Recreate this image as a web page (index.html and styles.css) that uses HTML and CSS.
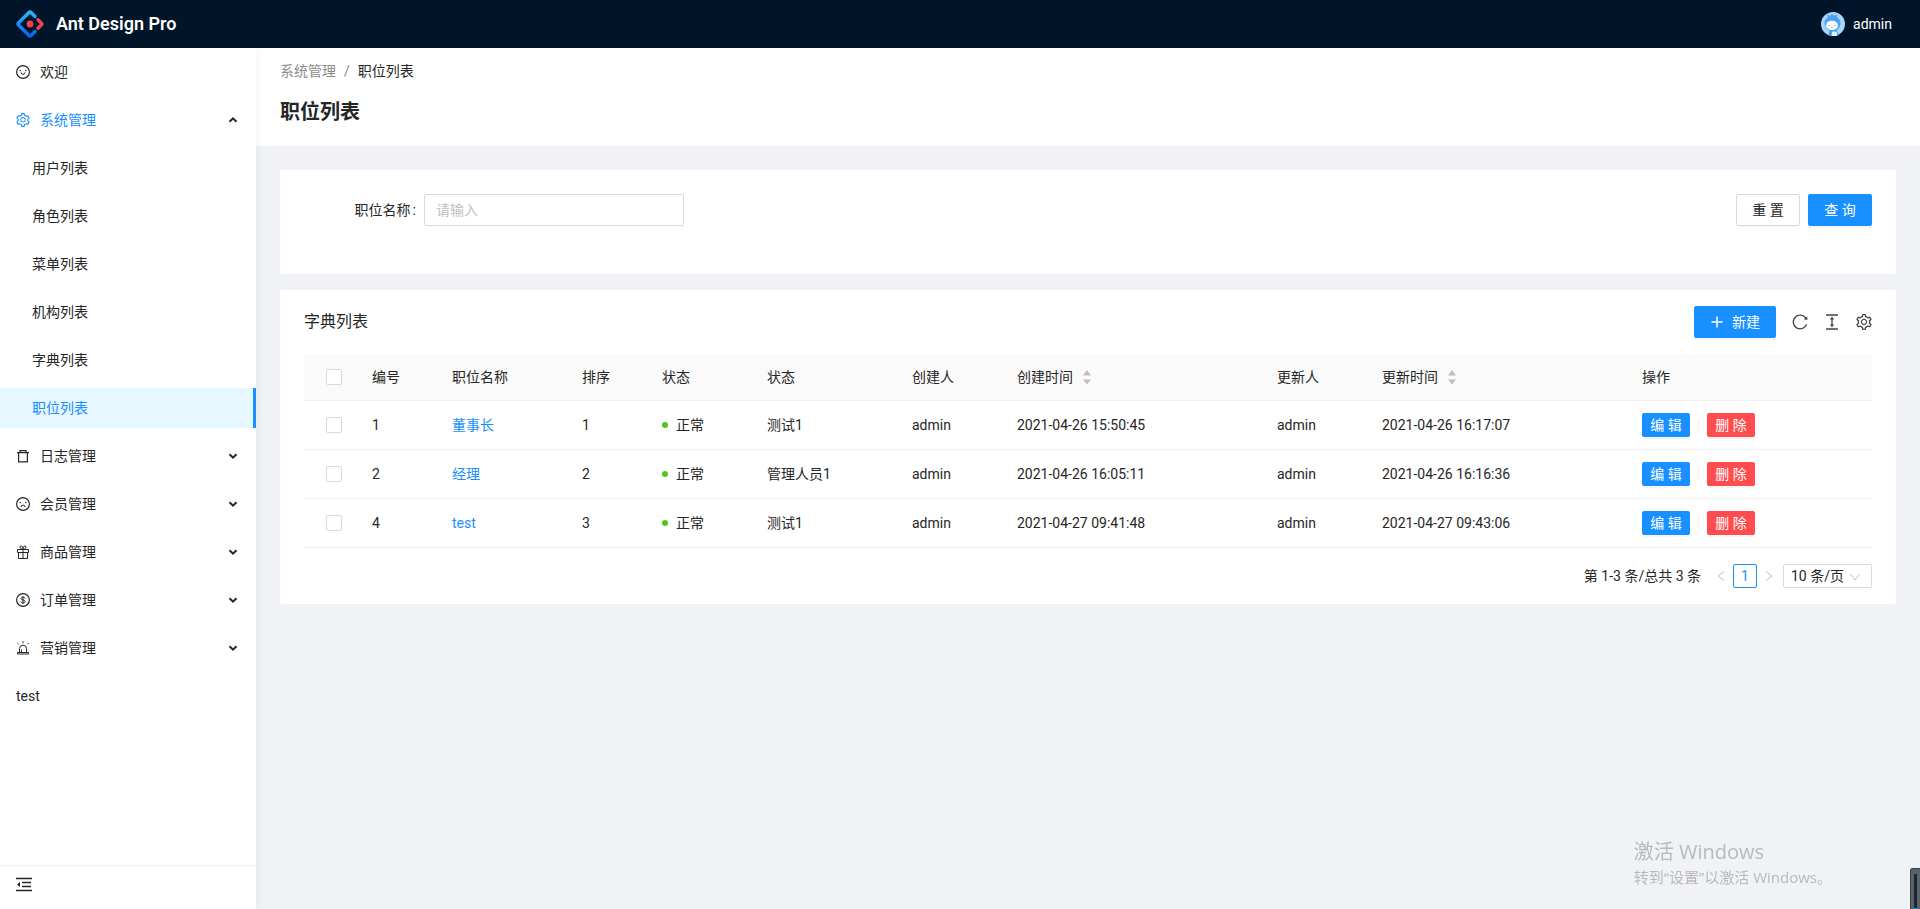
FILE: index.html
```html
<!DOCTYPE html>
<html lang="zh-CN">
<head>
<meta charset="utf-8">
<title>职位列表 - Ant Design Pro</title>
<link rel="stylesheet" href="styles.css">
</head>
<body>
<svg class="sprite" aria-hidden="true">
  <symbol id="i-face" viewBox="0 0 896 896"><circle cx="448" cy="448" r="410" fill="none" stroke="currentColor" stroke-width="76"/><circle cx="272" cy="357" r="48"/><circle cx="624" cy="357" r="48"/></symbol>
  <symbol id="i-setting" viewBox="64 64 896 896"><path d="M924.8 625.7l-65.5-56c3.1-19 4.7-38.4 4.7-57.8s-1.6-38.8-4.7-57.8l65.5-56a32.03 32.03 0 009.3-35.2l-.9-2.6a443.74 443.74 0 00-79.7-137.9l-1.8-2.1a32.12 32.12 0 00-35.1-9.5l-81.3 28.9c-30-24.6-63.5-44-99.7-57.6l-15.7-85a32.05 32.05 0 00-25.8-25.7l-2.7-.5c-52.1-9.4-106.9-9.4-159 0l-2.7.5a32.05 32.05 0 00-25.8 25.7l-15.8 85.4a351.86 351.86 0 00-99 57.4l-81.9-29.1a32 32 0 00-35.1 9.5l-1.8 2.1a446.02 446.02 0 00-79.7 137.9l-.9 2.6c-4.5 12.5-.8 26.5 9.3 35.2l66.3 56.6c-3.1 18.8-4.6 38-4.6 57.1 0 19.2 1.5 38.4 4.6 57.1L99 625.5a32.03 32.03 0 00-9.3 35.2l.9 2.6c18.1 50.4 44.9 96.9 79.7 137.9l1.8 2.1a32.12 32.12 0 0035.1 9.5l81.9-29.1c29.8 24.5 63.1 43.9 99 57.4l15.8 85.4a32.05 32.05 0 0025.8 25.7l2.7.5a449.4 449.4 0 00159 0l2.7-.5a32.05 32.05 0 0025.8-25.7l15.7-85a350 350 0 0099.7-57.6l81.3 28.9a32 32 0 0035.1-9.5l1.8-2.1c34.8-41.1 61.6-87.5 79.7-137.9l.9-2.6c4.5-12.3.8-26.3-9.3-35zM788.3 465.9c2.5 15.1 3.8 30.6 3.8 46.1s-1.3 31-3.8 46.1l-6.6 40.1 74.7 63.9a370.03 370.03 0 01-42.6 73.6L721 702.8l-31.4 25.8c-23.9 19.6-50.5 35-79.3 45.8l-38.1 14.3-17.9 97a377.5 377.5 0 01-85 0l-17.9-97.2-37.8-14.5c-28.5-10.8-55-26.2-78.7-45.7l-31.4-25.9-93.4 33.2c-17-22.9-31.2-47.6-42.6-73.6l75.5-64.5-6.5-40c-2.4-14.9-3.7-30.3-3.7-45.5 0-15.3 1.2-30.6 3.7-45.5l6.5-40-75.5-64.5c11.3-26.1 25.6-50.7 42.6-73.6l93.4 33.2 31.4-25.9c23.7-19.5 50.2-34.9 78.7-45.7l37.9-14.3 17.9-97.2c28.1-3.2 56.8-3.2 85 0l17.9 97 38.1 14.3c28.7 10.8 55.4 26.2 79.3 45.8l31.4 25.8 92.8-32.9c17 22.9 31.2 47.6 42.6 73.6L781.8 426l6.5 39.9zM512 326c-97.2 0-176 78.8-176 176s78.8 176 176 176 176-78.8 176-176-78.8-176-176-176zm79.2 255.2A111.6 111.6 0 01512 614c-29.9 0-58-11.7-79.2-32.8A111.6 111.6 0 01400 502c0-29.9 11.7-58 32.8-79.2C454 401.6 482.1 390 512 390c29.9 0 58 11.6 79.2 32.8A111.6 111.6 0 01624 502c0 29.9-11.7 58-32.8 79.2z"/></symbol>
  <symbol id="i-reload" viewBox="64 64 896 896"><path d="M909.1 209.3l-56.4 44.1C775.8 155.1 656.2 92 521.9 92 290 92 102.3 279.5 102 511.5 101.7 743.7 289.8 932 521.9 932c181.3 0 335.8-115 394.6-276.1 1.5-4.2-.7-8.9-4.9-10.3l-56.7-19.5a8 8 0 00-10.1 4.8c-1.8 5-3.8 10-5.9 14.9-17.3 41-42.1 77.8-73.7 109.4A344.77 344.77 0 01655.9 829c-42.3 17.9-87.4 27-133.8 27-46.5 0-91.5-9.1-133.8-27A341.5 341.5 0 01279 755.2a342.16 342.16 0 01-73.7-109.4c-17.9-42.4-27-87.4-27-133.9s9.1-91.5 27-133.9c17.3-41 42.1-77.8 73.7-109.4 31.6-31.6 68.4-56.4 109.3-73.8 42.3-17.9 87.4-27 133.8-27 46.5 0 91.5 9.1 133.8 27a341.5 341.5 0 01109.3 73.8c9.9 9.9 19.2 20.4 27.8 31.4l-60.2 47a8 8 0 003 14.1l175.6 43c5 1.2 9.9-2.6 9.9-7.7l.8-180.9c-.1-6.6-7.8-10.3-13-6.2z"/></symbol>
  <symbol id="i-chevron" viewBox="0 0 10 10"><path d="M1.5 3.2 5 6.6l3.500-3.400" fill="none" stroke="currentColor" stroke-width="2"/></symbol>
  <symbol id="i-sort" viewBox="0 0 10 16"><path d="M1 6.500 5 1l4 5.500zM1 10.500h8L5 15.500z"/></symbol>
  <symbol id="i-angle" viewBox="0 0 12 12"><path d="M1.500 3 6 9l4.500-6" fill="none" stroke="currentColor"/></symbol>
</svg>

<header class="topbar">
  <a class="brand" href="#">
    <svg class="logo" viewBox="0 0 28 28" fill="none" stroke-linecap="round" stroke-linejoin="round" stroke-width="3.400">
      <defs><linearGradient id="g-blue" x1="0" y1="0" x2="0" y2="1"><stop offset="0" stop-color="#29b9fb"/><stop offset="1" stop-color="#0a62f5"/></linearGradient></defs>
      <path stroke="url(#g-blue)" d="M19 6.500 15 2.500Q14 1.500 13 2.500L2.500 13Q1.500 14 2.500 15L13 25.500Q14 26.500 15 25.500L19 21.500"/>
      <path stroke="#f0424e" d="M22 9.700 25.500 13.200Q26.300 14 25.500 14.800L22 18.300"/>
      <circle cx="14" cy="14" r="3.400" fill="#f0424e"/>
    </svg>
    <span class="brand-name">Ant Design Pro</span>
  </a>
  <div class="account">
    <svg class="avatar" viewBox="0 0 24 24">
      <circle cx="12" cy="12" r="12" fill="#a5d5fb"/>
      <path d="M7 5 6 2.500l3 1.200 2-1.700 2 1.600 3-1 0 3z" fill="#5b9fe0"/>
      <path d="M9 18h6.500l2 5a12 12 0 0 1-10 0z" fill="#2e9df5"/>
      <path d="M11 19.500h4.500l1 4a12 12 0 0 1-6 .4z" fill="#e0f1ff"/>
      <ellipse cx="11.500" cy="11.500" rx="8" ry="7.800" fill="#4aa3ef"/>
      <ellipse cx="11" cy="13.400" rx="6" ry="4.700" fill="#fff"/>
      <path d="M7.500 13.500h1.500M13 13.500h1.500M10 15.300h2" stroke="#8ba9d8"/>
    </svg>
    <span>admin</span>
  </div>
</header>

<div class="layout">
  <aside class="sidebar">
    <nav class="menu">
      <a class="item" href="#"><svg class="icon"><use href="#i-face"/><svg viewBox="0 0 896 896"><path class="line" d="M320 470a128 128 0 0 0 256 0" stroke-width="64"/></svg></svg>欢迎</a>
      <a class="item open" href="#"><svg class="icon"><use href="#i-setting"/></svg>系统管理<svg class="arrow up"><use href="#i-chevron"/></svg></a>
      <a class="item sub" href="#">用户列表</a>
      <a class="item sub" href="#">角色列表</a>
      <a class="item sub" href="#">菜单列表</a>
      <a class="item sub" href="#">机构列表</a>
      <a class="item sub" href="#">字典列表</a>
      <a class="item sub selected" href="#" aria-current="page">职位列表</a>
      <a class="item" href="#"><svg class="icon line" viewBox="0 0 14 14" stroke-width="1.200"><path d="M1 3.600h12M4 3.300V1.600h6v1.700M2.600 3.800v9.100h8.800V3.800"/></svg>日志管理<svg class="arrow"><use href="#i-chevron"/></svg></a>
      <a class="item" href="#"><svg class="icon"><use href="#i-face"/><svg viewBox="0 0 896 896"><path class="line" d="M320 650a128 128 0 0 1 256 0" stroke-width="64"/></svg></svg>会员管理<svg class="arrow"><use href="#i-chevron"/></svg></a>
      <a class="item" href="#"><svg class="icon line" viewBox="0 0 14 14"><path d="M1.500 4.500h11v3h-11zM2.500 7.500v6h9v-6M7 4.500v9"/><path d="M7 4.300C3.500 4.300 3.200 1 5 1s2 2 2 3.300C7 3 7.200 1 9 1s1.500 3.300-2 3.300z"/></svg>商品管理<svg class="arrow"><use href="#i-chevron"/></svg></a>
      <a class="item" href="#"><svg class="icon line" viewBox="0 0 14 14"><circle cx="7" cy="7" r="6.400" stroke-width="1.200"/><path d="M9 5.500C8.800 4.500 8 4.200 7 4.200c-1.200 0-2 .5-2 1.400C5 7.400 9.100 6.500 9.100 8.400c0 1-.9 1.500-2.100 1.500S5 9.400 4.900 8.400M7 3.200v7.600"/></svg>订单管理<svg class="arrow"><use href="#i-chevron"/></svg></a>
      <a class="item" href="#"><svg class="icon line" viewBox="0 0 14 14"><path d="M3.500 11.500V7.700a3.500 3.500 0 0 1 7 0v3.800M1.500 11.500h11v1.500h-11zM5.500 11V8.500M7 .3v2M1.300 2l1.200 1.200M12.700 2l-1.200 1.200"/></svg>营销管理<svg class="arrow"><use href="#i-chevron"/></svg></a>
      <a class="item" href="#">test</a>
    </nav>
    <div class="sidebar-foot">
      <button class="icon-btn" type="button" aria-label="收起菜单"><svg class="icon-lg line" viewBox="0 0 16 16" stroke-width="1.300"><path d="M0 1.500h16M0 13.500h16M6 5.500h9M6 9.500h9"/><path class="solid" d="M4 5v5L1 7.500z"/></svg></button>
    </div>
  </aside>

  <main class="main">
    <div class="page-head">
      <nav class="crumbs"><a href="#">系统管理</a><span class="slash">/</span><span class="current">职位列表</span></nav>
      <h1>职位列表</h1>
    </div>

    <div class="content">
      <form class="card search">
        <div class="field">
          <label for="post-name">职位名称<span class="colon">:</span></label>
          <input id="post-name" class="text-input" type="text" placeholder="请输入">
        </div>
        <div class="actions">
          <button class="btn" type="reset">重 置</button>
          <button class="btn primary" type="button">查 询</button>
        </div>
      </form>

      <section class="card list">
        <div class="toolbar">
          <h2>字典列表</h2>
          <div class="tools">
            <button class="btn primary create" type="button"><svg class="icon line" viewBox="0 0 14 14" stroke-width="1.500"><path d="M7 1.500v11M1.500 7h11"/></svg>新建</button>
            <button class="icon-btn" type="button" aria-label="刷新"><svg class="icon-lg"><use href="#i-reload"/></svg></button>
            <button class="icon-btn" type="button" aria-label="密度"><svg class="icon-lg line" viewBox="0 0 16 16" stroke-width="1.300"><path d="M2 1h12M2 15h12M8 4v8"/><path class="solid" d="M8 2.800 10.200 5.600H5.800zM8 13.200 10.200 10.400H5.800z"/></svg></button>
            <button class="icon-btn" type="button" aria-label="列设置"><svg class="icon-lg"><use href="#i-setting"/></svg></button>
          </div>
        </div>

        <table>
          <colgroup><col class="w60"><col class="w80"><col class="w130"><col class="w80"><col class="w105"><col class="w145"><col class="w105"><col class="w260"><col class="w105"><col class="w260"><col class="w238"></colgroup>
          <thead>
            <tr><th class="pick"><input type="checkbox" aria-label="全选"></th><th>编号</th><th>职位名称</th><th>排序</th><th>状态</th><th>状态</th><th>创建人</th><th><span class="sortable">创建时间<svg class="sorter"><use href="#i-sort"/></svg></span></th><th>更新人</th><th><span class="sortable">更新时间<svg class="sorter"><use href="#i-sort"/></svg></span></th><th>操作</th></tr>
          </thead>
          <tbody>
            <tr><td class="pick"><input type="checkbox" aria-label="选择 董事长"></td><td>1</td><td><a href="#">董事长</a></td><td>1</td><td><span class="status">正常</span></td><td>测试1</td><td>admin</td><td>2021-04-26 15:50:45</td><td>admin</td><td>2021-04-26 16:17:07</td><td><div class="ops"><button class="btn small primary" type="button">编 辑</button><span class="divider"></span><button class="btn small danger" type="button">删 除</button></div></td></tr>
            <tr><td class="pick"><input type="checkbox" aria-label="选择 经理"></td><td>2</td><td><a href="#">经理</a></td><td>2</td><td><span class="status">正常</span></td><td>管理人员1</td><td>admin</td><td>2021-04-26 16:05:11</td><td>admin</td><td>2021-04-26 16:16:36</td><td><div class="ops"><button class="btn small primary" type="button">编 辑</button><span class="divider"></span><button class="btn small danger" type="button">删 除</button></div></td></tr>
            <tr><td class="pick"><input type="checkbox" aria-label="选择 test"></td><td>4</td><td><a href="#">test</a></td><td>3</td><td><span class="status">正常</span></td><td>测试1</td><td>admin</td><td>2021-04-27 09:41:48</td><td>admin</td><td>2021-04-27 09:43:06</td><td><div class="ops"><button class="btn small primary" type="button">编 辑</button><span class="divider"></span><button class="btn small danger" type="button">删 除</button></div></td></tr>
          </tbody>
        </table>

        <div class="pager">
          <span class="total">第 1-3 条/总共 3 条</span>
          <button class="step" type="button" disabled aria-label="上一页"><svg class="angle left"><use href="#i-angle"/></svg></button>
          <button class="page" type="button">1</button>
          <button class="step" type="button" disabled aria-label="下一页"><svg class="angle right"><use href="#i-angle"/></svg></button>
          <div class="size">
            <select aria-label="每页条数"><option>10 条/页</option></select>
            <svg class="angle down"><use href="#i-angle"/></svg>
          </div>
        </div>
      </section>
    </div>
  </main>
</div>

<div class="watermark"><div class="wm-title">激活 Windows</div><div>转到“设置”以激活 Windows。</div></div>
<div class="gadget"><div class="gadget-slot"></div></div>
</body>
</html>
```

FILE: styles.css
```css
* { box-sizing: border-box; }

body {
  margin: 0;
  min-height: 100vh;
  display: flex;
  flex-direction: column;
  background: #f0f2f5;
  color: #262626;
  font: 14px/22px Roboto, "Noto Sans CJK SC", sans-serif;
}

a { color: inherit; text-decoration: none; }
button, input, select { font: inherit; color: inherit; }
h1, h2 { margin: 0; }
svg { display: block; flex: none; fill: currentColor; }
.line { fill: none; stroke: currentColor; }
.solid { fill: currentColor; stroke: none; }
.sprite { position: absolute; width: 0; height: 0; }
.icon { width: 14px; height: 14px; }
.icon-lg { width: 16px; height: 16px; }
.icon-btn { padding: 0; border: 0; background: none; }

/* Top bar */
.topbar {
  display: flex;
  align-items: center;
  justify-content: space-between;
  height: 48px;
  padding: 0 28px 0 16px;
  background: #001529;
  color: #fff;
}
.brand { display: flex; align-items: center; gap: 12px; }
.logo { width: 28px; height: 28px; fill: none; }
.brand-name { font-size: 18px; font-weight: 600; }
.account { display: flex; align-items: center; gap: 8px; }
.avatar { width: 24px; height: 24px; }

/* Sidebar */
.layout { flex: 1; display: flex; }
.sidebar {
  flex: none;
  width: 256px;
  display: flex;
  flex-direction: column;
  background: #fff;
  box-shadow: 2px 0 8px rgba(29, 35, 41, .05);
  z-index: 1;
}
.menu { flex: 1; display: flex; flex-direction: column; gap: 8px; padding-top: 4px; }
.item { display: flex; align-items: center; gap: 10px; height: 40px; padding: 0 18px 0 16px; }
.item.open { color: #1890ff; }
.item.sub { padding-left: 32px; }
.item.selected { background: #e6f7ff; color: #1890ff; border-right: 3px solid #1890ff; }
.arrow { width: 10px; height: 10px; margin-left: auto; color: #262626; }
.arrow.up { transform: rotate(180deg); }
.sidebar-foot { display: flex; padding: 11px 16px 16px; border-top: 1px solid #f0f0f0; }

/* Page heading */
.main { flex: 1; min-width: 0; }
.page-head { padding: 12px 24px 18px; background: #fff; }
.crumbs { display: flex; gap: 8px; color: #8c8c8c; }
.crumbs .current { color: #262626; }
h1 { margin-top: 14px; font-size: 20px; line-height: 32px; font-weight: 600; }

/* Cards */
.content { display: flex; flex-direction: column; gap: 16px; padding: 24px; }
.card { background: #fff; border-radius: 2px; padding: 0 24px; }

/* Search form */
.search { display: grid; grid-template-columns: repeat(4, 1fr); gap: 16px; padding: 24px 24px 48px; }
.field { display: flex; align-items: center; }
.field label { flex: none; width: 120px; padding-right: 8px; text-align: right; }
.colon { margin-left: 2px; }
.text-input {
  flex: 1;
  min-width: 0;
  height: 32px;
  padding: 0 11px;
  border: 1px solid #d9d9d9;
  border-radius: 2px;
  background: #fff;
}
.text-input::placeholder { color: #bfbfbf; }
.actions { grid-column: 4; display: flex; justify-content: flex-end; gap: 8px; }

/* Buttons */
.btn {
  height: 32px;
  padding: 0 15px;
  border: 1px solid #d9d9d9;
  border-radius: 2px;
  background: #fff;
  box-shadow: 0 2px 0 rgba(0, 0, 0, .02);
  white-space: nowrap;
}
.btn.primary { border-color: #1890ff; background: #1890ff; color: #fff; }
.btn.danger { border-color: #ff4d4f; background: #ff4d4f; color: #fff; }
.btn.primary, .btn.danger { box-shadow: 0 2px 0 rgba(0, 0, 0, .04); }
.btn.small { width: 48px; height: 24px; padding: 0; }
.btn.create { display: flex; align-items: center; gap: 8px; }
.actions .btn { width: 64px; }

/* Table */
.toolbar { display: flex; align-items: center; justify-content: space-between; height: 64px; }
h2 { font-size: 16px; line-height: 24px; font-weight: 400; }
.tools { display: flex; align-items: center; gap: 16px; color: #434343; }
table { width: 100%; table-layout: fixed; border-collapse: separate; border-spacing: 0; }
th, td { padding: 12px 8px; border-bottom: 1px solid #f0f0f0; text-align: left; font-weight: 400; }
td { padding-top: 0; padding-bottom: 0; height: 49px; }
th { background: #fafafa; }
td a { color: #1890ff; }
.w60 { width: 60px; }
.w80 { width: 80px; }
.w105 { width: 105px; }
.w130 { width: 130px; }
.w145 { width: 145px; }
.w238 { width: 238px; }
.w260 { width: 260px; }
.pick { text-align: center; }
input[type="checkbox"] {
  appearance: none;
  display: block;
  width: 16px;
  height: 16px;
  margin: 0 auto;
  border: 1px solid #d9d9d9;
  border-radius: 2px;
  background: #fff;
}
.sortable { display: flex; align-items: center; gap: 9px; }
.sorter { width: 10px; height: 16px; color: #bfbfbf; }
.status { display: flex; align-items: center; gap: 8px; }
.status::before { content: ""; width: 6px; height: 6px; border-radius: 50%; background: #52c41a; }
.ops { display: flex; align-items: center; gap: 8px; }
.divider { width: 1px; height: 13px; background: #f0f0f0; }

/* Pagination */
.pager { display: flex; align-items: center; justify-content: flex-end; padding: 16px 0; }
.total { margin-right: 8px; }
.step, .page { width: 24px; height: 24px; padding: 0; border: 0; background: none; }
.step { display: flex; align-items: center; justify-content: center; color: #bfbfbf; }
.page { border: 1px solid #1890ff; border-radius: 2px; color: #1890ff; background: #fff; }
.angle { width: 12px; height: 12px; color: #bfbfbf; }
.angle.left { transform: rotate(90deg); }
.angle.right { transform: rotate(-90deg); }
.size { position: relative; margin-left: 2px; }
.size select {
  appearance: none;
  display: block;
  width: 89px;
  height: 24px;
  padding: 0 24px 0 7px;
  border: 1px solid #d9d9d9;
  border-radius: 2px;
  background: #fff;
}
.size .angle { position: absolute; right: 11px; top: 7px; pointer-events: none; }

/* Desktop overlays */
.watermark {
  position: fixed;
  right: 88px;
  bottom: 21px;
  color: #b8b9bc;
  font: 15px/22px "Open Sans", "Noto Sans CJK SC", sans-serif;
}
.wm-title { font-size: 20px; line-height: 28px; }
.gadget {
  position: fixed;
  right: 0;
  bottom: 0;
  z-index: 2;
  width: 10px;
  height: 41px;
  padding: 5px 3px 0;
  border: 1px solid #3a4046;
  border-width: 1px 0 0 1px;
  border-radius: 3px 0 0 0;
  background: #59636b;
}
.gadget-slot { height: 36px; background: #20262e; border-bottom: 2px solid #18a0e8; }
```
